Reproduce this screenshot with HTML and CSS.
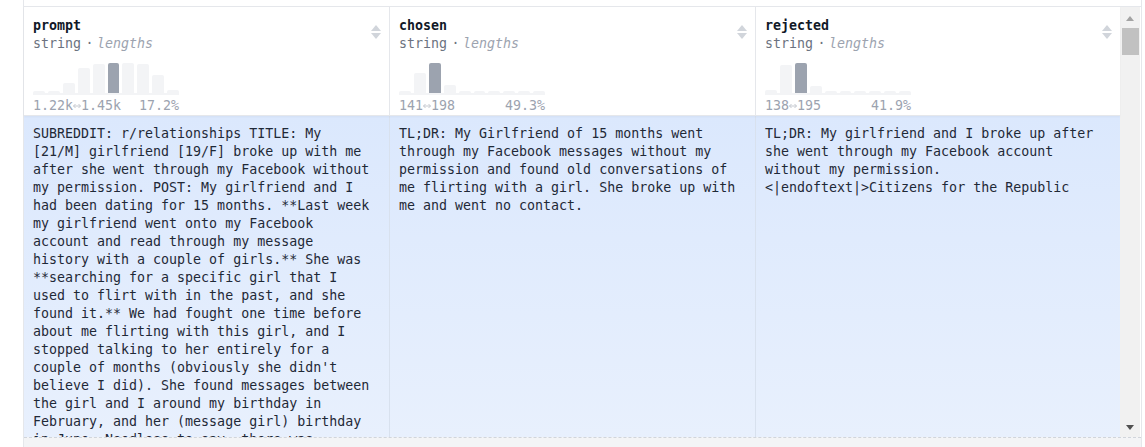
FILE: index.html
```html
<!DOCTYPE html>
<html>
<head>
<meta charset="utf-8">
<link rel="stylesheet" href="styles.css">
</head>
<body>
<div class="frame">
  <div class="topstrip"></div>
  <div class="table">
    <div class="cols">
      <div class="head">
        <div class="hcell">
          <div class="sort"><span class="up"></span><span class="down"></span></div>
          <div class="name">prompt</div>
          <div class="type">string<span class="dot">·</span><em>lengths</em></div>
          <div class="hist">
            <div class="bars">
              <span class="bar" style="height:2px"></span>
              <span class="bar" style="height:2px"></span>
              <span class="bar" style="height:10px"></span>
              <span class="bar" style="height:25px"></span>
              <span class="bar" style="height:29px"></span>
              <span class="bar sel" style="height:30px"></span>
              <span class="bar" style="height:30px"></span>
              <span class="bar" style="height:29px"></span>
              <span class="bar" style="height:18px"></span>
              <span class="bar" style="height:3px"></span>
            </div>
            <div class="track"></div>
            <div class="labels"><span>1.22k<svg class="rng" viewBox="0 0 8 8"><path d="M0.5 4H7.5M2.5 2L0.5 4L2.5 6M5.5 2L7.5 4L5.5 6" fill="none" stroke="currentColor" stroke-width="1"/></svg>1.45k</span><span>17.2%</span></div>
          </div>
        </div>
        <div class="hcell">
          <div class="sort"><span class="up"></span><span class="down"></span></div>
          <div class="name">chosen</div>
          <div class="type">string<span class="dot">·</span><em>lengths</em></div>
          <div class="hist">
            <div class="bars">
              <span class="bar" style="height:2px"></span>
              <span class="bar" style="height:20px"></span>
              <span class="bar sel" style="height:30px"></span>
              <span class="bar" style="height:8px"></span>
              <span class="bar" style="height:2px"></span>
              <span class="bar" style="height:2px"></span>
              <span class="bar" style="height:2px"></span>
              <span class="bar" style="height:2px"></span>
              <span class="bar" style="height:2px"></span>
              <span class="bar" style="height:2px"></span>
            </div>
            <div class="track"></div>
            <div class="labels"><span>141<svg class="rng" viewBox="0 0 8 8"><path d="M0.5 4H7.5M2.5 2L0.5 4L2.5 6M5.5 2L7.5 4L5.5 6" fill="none" stroke="currentColor" stroke-width="1"/></svg>198</span><span>49.3%</span></div>
          </div>
        </div>
        <div class="hcell">
          <div class="sort"><span class="up"></span><span class="down"></span></div>
          <div class="name">rejected</div>
          <div class="type">string<span class="dot">·</span><em>lengths</em></div>
          <div class="hist">
            <div class="bars">
              <span class="bar" style="height:3px"></span>
              <span class="bar" style="height:28px"></span>
              <span class="bar sel" style="height:30px"></span>
              <span class="bar" style="height:7px"></span>
              <span class="bar" style="height:2px"></span>
              <span class="bar" style="height:2px"></span>
              <span class="bar" style="height:2px"></span>
              <span class="bar" style="height:2px"></span>
              <span class="bar" style="height:2px"></span>
              <span class="bar" style="height:2px"></span>
            </div>
            <div class="track"></div>
            <div class="labels"><span>138<svg class="rng" viewBox="0 0 8 8"><path d="M0.5 4H7.5M2.5 2L0.5 4L2.5 6M5.5 2L7.5 4L5.5 6" fill="none" stroke="currentColor" stroke-width="1"/></svg>195</span><span>41.9%</span></div>
          </div>
        </div>
      </div>
      <div class="body">
        <div class="bcell">SUBREDDIT: r/relationships TITLE: My [21/M] girlfriend [19/F] broke up with me after she went through my Facebook without my permission. POST: My girlfriend and I had been dating for 15 months. **Last week my girlfriend went onto my Facebook account and read through my message history with a couple of girls.** She was **searching for a specific girl that I used to flirt with in the past, and she found it.** We had fought one time before about me flirting with this girl, and I stopped talking to her entirely for a couple of months (obviously she didn't believe I did). She found messages between the girl and I around my birthday in February, and her (message girl) birthday in June. Needless to say, there was flirting going on in those messages, and it was wrong of me.</div>
        <div class="bcell">TL;DR: My Girlfriend of 15 months went through my Facebook messages without my permission and found old conversations of me flirting with a girl. She broke up with me and went no contact.</div>
        <div class="bcell">TL;DR: My girlfriend and I broke up after she went through my Facebook account without my permission. &lt;|endoftext|&gt;Citizens for the Republic</div>
      </div>
    </div>
    <div class="scrollbar">
      <div class="arrow up-arrow"></div>
      <div class="thumb"></div>
      <div class="track-sb"></div>
      <div class="arrow down-arrow"></div>
    </div>
  </div>
  <div class="foot"></div>
</div>
</body>
</html>
```

FILE: styles.css
```css
html, body {
  margin: 0;
  padding: 0;
  background: #ffffff;
}
body {
  width: 1145px;
  height: 447px;
  overflow: hidden;
  font-family: "DejaVu Sans Mono", "Liberation Mono", monospace;
  font-size: 13.3px;
  line-height: 18px;
}
.frame {
  margin-left: 23px;
  width: 1117px;
  border-left: 1px solid #e5e7eb;
  border-right: 1px solid #e5e7eb;
  height: 447px;
  display: flex;
  flex-direction: column;
}
.topstrip {
  height: 6px;
  border-bottom: 1px solid #e5e7eb;
  flex: none;
}
.table {
  display: flex;
  height: 430px;
  flex: none;
}
.cols {
  width: 1096px;
  display: flex;
  flex-direction: column;
}
.head, .body {
  display: grid;
  grid-template-columns: 366px 366px 364px;
}
.head {
  height: 109px;
  box-sizing: border-box;
  border-bottom: 1px solid #e5e7eb;
  background: #ffffff;
  box-shadow: 0 1px 2px rgba(0,0,0,0.04);
  position: relative;
  z-index: 1;
}
.hcell {
  position: relative;
  border-right: 1px solid #e5e7eb;
  padding: 10px 16px 0 9px;
}
.hcell:last-child, .bcell:last-child {
  border-right: none;
}
.name {
  font-weight: bold;
  color: #111827;
}
.type {
  color: #6b7280;
}
.dot {
  display: inline-block;
  margin: 0 2px 0 3px;
  width: 11px;
  text-align: center;
}
.type em {
  color: #9ca3af;
  font-style: italic;
}
.sort {
  position: absolute;
  right: 8px;
  top: 18px;
  display: flex;
  flex-direction: column;
  gap: 2px;
}
.sort .up {
  width: 0; height: 0;
  border-left: 5px solid transparent;
  border-right: 5px solid transparent;
  border-bottom: 6px solid #d1d5db;
}
.sort .down {
  width: 0; height: 0;
  border-left: 5px solid transparent;
  border-right: 5px solid transparent;
  border-top: 6px solid #d1d5db;
}
.hist {
  width: 146px;
  margin-top: 10px;
}
.bars {
  height: 30px;
  display: flex;
  align-items: flex-end;
  gap: 3px;
}
.bar {
  flex: 1;
  background: #f3f4f6;
  border-radius: 2px 2px 0 0;
}
.bar.sel {
  background: #9ca3af;
}
.track {
  height: 2px;
  background: #f3f4f6;
}
.labels {
  display: flex;
  justify-content: space-between;
  color: #9ca3af;
  margin-top: 2px;
}
.rng {
  width: 8px;
  height: 8px;
  vertical-align: 0;
  color: #c4c8cf;
}
.body {
  height: 321px;
  overflow: hidden;
  background: linear-gradient(#dbe8fd, #e8f0fd);
}
.bcell {
  border-right: 1px solid #d8e1ee;
  padding: 9px 16px 0 9px;
  color: #1f2937;
  overflow: hidden;
  word-wrap: break-word;
}
.scrollbar {
  width: 20px;
  background: #f1f1f1;
  display: flex;
  flex-direction: column;
  align-items: center;
}
.arrow {
  width: 0; height: 0;
  border-left: 4.5px solid transparent;
  border-right: 4.5px solid transparent;
}
.up-arrow {
  margin-top: 9px;
  border-bottom: 5px solid #a3a3a3;
}
.thumb {
  margin-top: 7px;
  width: 17px;
  height: 27px;
  background: #c1c1c1;
}
.track-sb {
  flex: 1;
}
.down-arrow {
  margin-bottom: 7px;
  border-top: 5px solid #505050;
}
.foot {
  flex: 1;
  border-top: 1px dashed #d1d5db;
  background: #f3f4f6;
}
```
